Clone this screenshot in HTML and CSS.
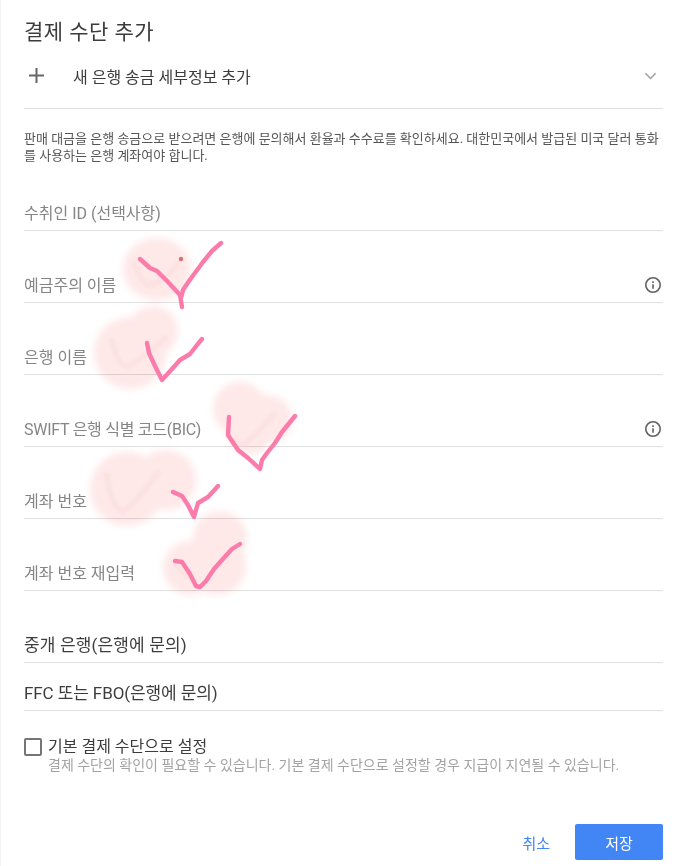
FILE: index.html
```html
<!DOCTYPE html>
<html lang="ko">
<head>
<meta charset="utf-8">
<title>결제 수단 추가</title>
<link rel="stylesheet" href="styles.css">
</head>
<body>
<main class="page">
  <h1 class="title">결제 수단 추가</h1>
  <div class="method">
    <svg class="plus" viewBox="0 0 15 15" aria-hidden="true"><path d="M7.5 0v15M0 7.5h15"/></svg>
    <span class="method-label">새 은행 송금 세부정보 추가</span>
    <svg class="chev" viewBox="0 0 14 9" aria-hidden="true"><path d="M1.2 1.5L7 7.3l5.8-5.8"/></svg>
  </div>
  <p class="desc">판매 대금을 은행 송금으로 받으려면 은행에 문의해서 환율과 수수료를 확인하세요. 대한민국에서 발급된 미국 달러 통화를 사용하는 은행 계좌여야 합니다.</p>
  <div class="fields">
    <div class="field field-first"><span class="ph">수취인 ID (선택사항)</span></div>
    <div class="field"><span class="ph">예금주의 이름</span>
      <svg class="info" viewBox="0 0 18 18" aria-hidden="true"><circle cx="9" cy="9" r="7.2"/><path d="M9 8.2v4.6M9 5.2v1.7"/></svg></div>
    <div class="field"><span class="ph">은행 이름</span></div>
    <div class="field"><span class="ph ph-tight">SWIFT 은행 식별 코드(BIC)</span>
      <svg class="info" viewBox="0 0 18 18" aria-hidden="true"><circle cx="9" cy="9" r="7.2"/><path d="M9 8.2v4.6M9 5.2v1.7"/></svg></div>
    <div class="field"><span class="ph">계좌 번호</span></div>
    <div class="field"><span class="ph">계좌 번호 재입력</span></div>
    <div class="field"><span class="val val-wide">중개 은행(은행에 문의)</span></div>
    <div class="field field-short"><span class="val val-tight">FFC 또는 FBO(은행에 문의)</span></div>
  </div>
  <div class="check">
    <span class="box"></span>
    <div class="check-text">
      <div class="check-title">기본 결제 수단으로 설정</div>
      <div class="check-sub">결제 수단의 확인이 필요할 수 있습니다. 기본 결제 수단으로 설정할 경우 지급이 지연될 수 있습니다.</div>
    </div>
  </div>
  <div class="actions">
    <button class="cancel" type="button">취소</button>
    <button class="save" type="button">저장</button>
  </div>
</main>
<svg class="marks" viewBox="0 0 674 866" aria-hidden="true">
  <defs>
    <filter id="soft" x="-20%" y="-20%" width="140%" height="140%"><feGaussianBlur stdDeviation="3.5"/></filter>
    <filter id="softer" x="-20%" y="-20%" width="140%" height="140%"><feGaussianBlur stdDeviation="1.5"/></filter>
  </defs>
  <g class="blob" filter="url(#soft)">
    <ellipse cx="157" cy="269" rx="34" ry="31"/>
    <circle cx="153" cy="331" r="25"/><circle cx="130" cy="353" r="36"/>
    <circle cx="240" cy="409" r="27"/><circle cx="268" cy="419" r="24"/><circle cx="250" cy="431" r="23"/>
    <circle cx="127" cy="489" r="37"/><circle cx="166" cy="480" r="30"/>
    <circle cx="220" cy="538" r="27"/><circle cx="190" cy="568" r="27"/><circle cx="217" cy="566" r="29"/>
  </g>
  <g class="ghost" filter="url(#softer)">
    <path d="M134 263Q142 285 150 285Q165 282 178 263"/>
    <path d="M112 340Q118 368 128 366Q145 358 165 338"/>
    <path d="M229 435Q238 446 246 444Q262 428 274 414"/>
    <path d="M107 475Q110 505 123 512Q138 500 158 473"/>
    <path d="M175 565L187 576"/>
  </g>
  <circle class="dot" cx="181" cy="259" r="2.2"/>
  <g class="tick">
    <path d="M140 259L150 268L157 271L168 282L180 295L182 307M181 298L183 290L189 281L203 262L212 251L221 243"/>
    <path d="M147 343L149 353L155 366L162 380L172 369L180 360L190 354L197 345L202 339"/>
    <path d="M229 417L228 435L238 450L248 458L260 469L262 460L267 453L275 443L282 432L295 416"/>
    <path d="M173 492L182 496L188 505L194 517L198 503L208 497L218 486"/>
    <path d="M175 561L182 562L190 574L196 586L200 587L206 581L214 569L222 560L232 549L240 544"/>
  </g>
</svg>
</body>
</html>
```
FILE: styles.css
```css
html, body {
  margin: 0;
  padding: 0;
  background: #fff;
}
body {
  position: relative;
  width: 674px;
  height: 866px;
  overflow: hidden;
  font-family: Roboto, "Noto Sans CJK KR", sans-serif;
}
.page {
  box-sizing: border-box;
  height: 866px;
  padding: 0 11px 0 23px;
  border-left: 1px solid #f3f3f3;
  display: flex;
  flex-direction: column;
}
.title {
  margin: 20px 0 0;
  font-size: 21px;
  line-height: 24px;
  font-weight: 400;
  letter-spacing: 0.45px;
  color: #3c3c3c;
}
.method {
  display: flex;
  align-items: center;
  box-sizing: border-box;
  height: 65px;
  border-bottom: 1px solid #e0e0e0;
  padding-bottom: 1px;
}
.plus {
  flex: none;
  width: 15px;
  height: 15px;
  margin-left: 5px;
  fill: none;
  stroke: #666;
  stroke-width: 2;
}
.method-label {
  margin-left: 29px;
  font-size: 16px;
  color: #3c3c3c;
}
.chev {
  margin-left: auto;
  margin-right: 6px;
  width: 13px;
  height: 8px;
  fill: none;
  stroke: #9e9e9e;
  stroke-width: 1.7;
}
.desc {
  margin: 21px 0 0;
  font-size: 13px;
  line-height: 17px;
  color: #555;
}
.fields {
  display: flex;
  flex-direction: column;
}
.field {
  box-sizing: border-box;
  height: 72px;
  display: flex;
  align-items: flex-end;
  justify-content: space-between;
  border-bottom: 1px solid #e0e0e0;
  padding-bottom: 6px;
}
.field-first {
  height: 67px;
}
.field-short {
  height: 48px;
}
.ph {
  font-size: 16px;
  line-height: 20px;
  color: #858585;
}
.ph-tight {
  letter-spacing: -0.27px;
}
.val {
  font-size: 17px;
  line-height: 22px;
  color: #3c3c3c;
}
.val-wide {
  letter-spacing: 0.15px;
}
.val-tight {
  letter-spacing: -0.1px;
}
.info {
  width: 18px;
  height: 18px;
  margin-right: 1px;
  margin-bottom: 2px;
  fill: none;
  stroke: #616161;
  stroke-width: 1.6;
}
.check {
  display: flex;
  gap: 6px;
  margin-top: 27px;
}
.box {
  box-sizing: border-box;
  flex: none;
  width: 18px;
  height: 18px;
  border: 2px solid #757575;
  border-radius: 2px;
}
.check-text {
  display: flex;
  flex-direction: column;
}
.check-title {
  font-size: 16px;
  line-height: 18px;
  color: #3c3c3c;
}
.check-sub {
  font-size: 14px;
  line-height: 18px;
  color: #a3a3a3;
}
.actions {
  margin-top: auto;
  margin-bottom: 6px;
  display: flex;
  align-items: center;
  justify-content: flex-end;
  gap: 25px;
}
.cancel, .save {
  font: inherit;
  font-size: 15px;
  border: 0;
  padding: 0;
  background: none;
}
.cancel {
  color: #4285f4;
}
.save {
  width: 88px;
  height: 36px;
  background: #4285f4;
  border-radius: 2px;
  color: #fff;
}
.marks {
  position: absolute;
  left: 0;
  top: 0;
  width: 674px;
  height: 866px;
  pointer-events: none;
}
.blob {
  fill: #fee8e8;
  mix-blend-mode: multiply;
}
.ghost {
  fill: none;
  stroke: #fbdcdc;
  stroke-width: 5;
  stroke-linecap: round;
  stroke-linejoin: round;
  opacity: 0.6;
}
.dot {
  fill: #d8706f;
}
.tick {
  fill: none;
  stroke: #fb7cab;
  stroke-width: 4.4;
  stroke-linecap: round;
  stroke-linejoin: round;
}
```
